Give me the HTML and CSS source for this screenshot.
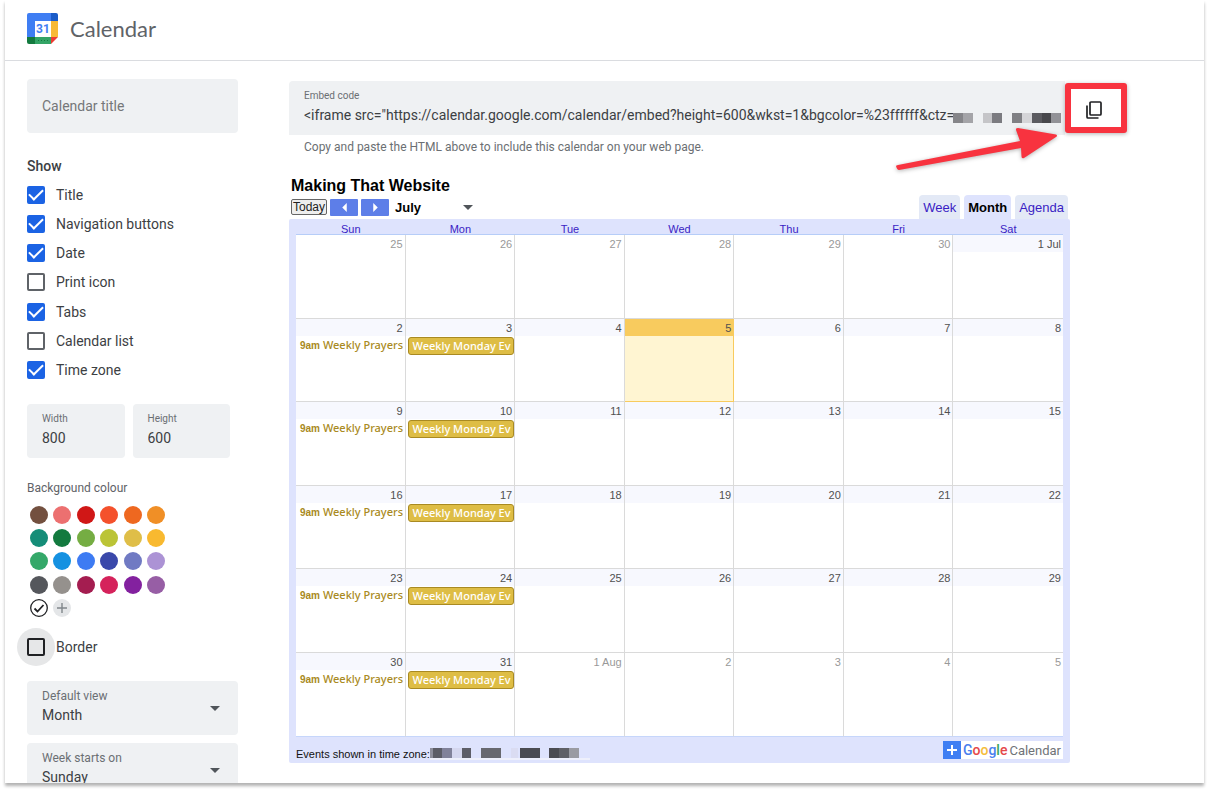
FILE: index.html
```html
<!DOCTYPE html>
<html lang="en-GB">
<head>
  <meta charset="UTF-8" />
  <meta name="viewport" content="width=device-width, initial-scale=1.0"/>
  <title>Calendar</title>
  <link rel="stylesheet" href="styles.css">
</head>
<body>
  <div class="page">
    <header class="topbar">
      <svg class="logo" viewBox="0 0 31 31" aria-hidden="true">
        <path d="M2 0H24V8H8V24H0V2Q0 0 2 0Z" fill="#3f7ef3"/>
        <path d="M24 0H29Q31 0 31 2V8H24Z" fill="#1b5cc8"/>
        <path d="M24 8H31V24H24Z" fill="#f8b934"/>
        <path d="M8 24H24V31H8Z" fill="#33a466"/>
        <path d="M0 24H8V31H2Q0 31 0 29Z" fill="#137a3f"/>
        <path d="M24 24H31L24 31Z" fill="#ee3b33"/>
        <path d="M8 8H24V24H8Z" fill="#fff"/>
        <path d="M11 27.500H22" stroke="#137a3f" stroke-width="1" stroke-dasharray="1 2"/>
        <text x="16" y="20" text-anchor="middle" class="logo-day">31</text>
      </svg>
      <span class="brand">Calendar</span>
    </header>

    <div class="layout">
      <aside class="sidebar">
        <input class="field title-field" type="text" placeholder="Calendar title" aria-label="Calendar title" />

        <h2 class="show-heading">Show</h2>
        <div class="options">
          <label class="option"><input type="checkbox" checked /> Title</label>
          <label class="option"><input type="checkbox" checked /> Navigation buttons</label>
          <label class="option"><input type="checkbox" checked /> Date</label>
          <label class="option"><input type="checkbox" /> Print icon</label>
          <label class="option"><input type="checkbox" checked /> Tabs</label>
          <label class="option"><input type="checkbox" /> Calendar list</label>
          <label class="option"><input type="checkbox" checked /> Time zone</label>
        </div>

        <div class="sizes">
          <div class="field">
            <label class="field-label small" for="width">Width</label>
            <input type="text" id="width" value="800" />
          </div>
          <div class="field">
            <label class="field-label small" for="height">Height</label>
            <input type="text" id="height" value="600" />
          </div>
        </div>

        <h2 class="colour-heading">Background colour</h2>
        <div class="swatches">
          <button class="swatch brown" aria-label="Cocoa"></button>
          <button class="swatch flamingo" aria-label="Flamingo"></button>
          <button class="swatch tomato" aria-label="Tomato"></button>
          <button class="swatch tangerine" aria-label="Tangerine"></button>
          <button class="swatch pumpkin" aria-label="Pumpkin"></button>
          <button class="swatch mango" aria-label="Mango"></button>
          <button class="swatch eucalyptus" aria-label="Eucalyptus"></button>
          <button class="swatch basil" aria-label="Basil"></button>
          <button class="swatch pistachio" aria-label="Pistachio"></button>
          <button class="swatch avocado" aria-label="Avocado"></button>
          <button class="swatch citron" aria-label="Citron"></button>
          <button class="swatch banana" aria-label="Banana"></button>
          <button class="swatch sage" aria-label="Sage"></button>
          <button class="swatch peacock" aria-label="Peacock"></button>
          <button class="swatch cobalt" aria-label="Cobalt"></button>
          <button class="swatch blueberry" aria-label="Blueberry"></button>
          <button class="swatch lavender" aria-label="Lavender"></button>
          <button class="swatch wisteria" aria-label="Wisteria"></button>
          <button class="swatch graphite" aria-label="Graphite"></button>
          <button class="swatch birch" aria-label="Birch"></button>
          <button class="swatch beetroot" aria-label="Beetroot"></button>
          <button class="swatch cherry" aria-label="Cherry"></button>
          <button class="swatch grape" aria-label="Grape"></button>
          <button class="swatch amethyst" aria-label="Amethyst"></button>
          <button class="swatch white" aria-label="White">
            <svg viewBox="0 0 18 18"><circle cx="9" cy="9" r="8.300" fill="#fff" stroke="#202124" stroke-width="1.300"/><path d="M4.500 9.500L7.500 12.500L13.500 6" fill="none" stroke="#202124" stroke-width="1.800"/></svg>
          </button>
          <button class="swatch add" aria-label="Add custom colour">
            <svg viewBox="0 0 18 18"><path d="M9 4V14M4 9H14" stroke="#80868b" stroke-width="1.400"/></svg>
          </button>
        </div>

        <label class="option border-option"><span class="ripple"><input type="checkbox" /></span> Border</label>

        <div class="field picker">
          <div class="picker-text">
            <label class="field-label" for="view">Default view</label>
            <select id="view"><option>Month</option><option>Week</option><option>Agenda</option></select>
          </div>
          <svg class="caret" viewBox="0 0 10 5"><path d="M0 0H10L5 5Z" fill="#50555a"/></svg>
        </div>
        <div class="field picker">
          <div class="picker-text">
            <label class="field-label" for="week-start">Week starts on</label>
            <select id="week-start"><option>Sunday</option><option>Monday</option><option>Saturday</option></select>
          </div>
          <svg class="caret" viewBox="0 0 10 5"><path d="M0 0H10L5 5Z" fill="#50555a"/></svg>
        </div>
      </aside>

      <main class="main">
        <div class="embed">
          <div class="embed-field">
            <label class="field-label small" for="embed-code">Embed code</label>
            <div class="embed-line">
              <input type="text" id="embed-code" readonly value='&lt;iframe src="https://calendar.google.com/calendar/embed?height=600&amp;wkst=1&amp;bgcolor=%23ffffff&amp;ctz=' />
              <svg class="redacted-code" viewBox="0 0 108 10" aria-hidden="true">
                <path d="M0 0H10V10H0Z" fill="#858589"/><path d="M10 0H20V10H10Z" fill="#a4a4a8"/>
                <path d="M30 0H39V10H30Z" fill="#c5c5c8"/><path d="M39 0H49V10H39Z" fill="#7b7b80"/>
                <path d="M59 0H69V10H59Z" fill="#808084"/><path d="M69 0H79V10H69Z" fill="#d5d5d8"/>
                <path d="M79 0H89V10H79Z" fill="#5b5b60"/><path d="M89 0H98V10H89Z" fill="#48484c"/>
                <path d="M98 0H108V10H98Z" fill="#929297"/>
              </svg>
            </div>
          </div>
          <button class="copy" aria-label="Copy to clipboard">
            <svg viewBox="0 0 16 18"><path d="M5 1H14Q15 1 15 2V13Q15 14 14 14H5Q4 14 4 13V2Q4 1 5 1ZM1 4.500V16Q1 17 2 17H12.500" fill="none" stroke="#202124" stroke-width="1.700"/></svg>
          </button>
          <svg class="arrow" viewBox="0 0 162 58" aria-hidden="true">
            <path d="M2 37L124 13L120 2Q119.500 0 122 0L160 6.500Q162 7.500 160 9L128 30Q125.500 31 125.500 28.500L125 20L3 42Q1 42 0 38Q0 37.500 2 37Z" fill="#f8333f"/>
          </svg>
        </div>
        <p class="hint">Copy and paste the HTML above to include this calendar on your web page.</p>

        <section class="preview">
          <h1>Making That Website</h1>
          <div class="controls">
            <button class="today">Today</button>
            <button class="nav" aria-label="Previous"><svg viewBox="0 0 5 10"><path d="M5 0V10L0 5Z" fill="#fff"/></svg></button>
            <button class="nav" aria-label="Next"><svg viewBox="0 0 5 10"><path d="M0 0V10L5 5Z" fill="#fff"/></svg></button>
            <button class="period"><span>July</span><svg class="caret" viewBox="0 0 10 5"><path d="M0 0H10L5 5Z" fill="#50555a"/></svg></button>
            <nav class="tabs">
              <a href="#">Week</a>
              <a href="#" class="active">Month</a>
              <a href="#">Agenda</a>
            </nav>
          </div>

          <div class="calendar">
            <table>
              <thead>
                <tr><th>Sun</th><th>Mon</th><th>Tue</th><th>Wed</th><th>Thu</th><th>Fri</th><th>Sat</th></tr>
              </thead>
              <tbody>
                <tr>
                  <td class="other"><span class="day">25</span></td>
                  <td class="other"><span class="day">26</span></td>
                  <td class="other"><span class="day">27</span></td>
                  <td class="other"><span class="day">28</span></td>
                  <td class="other"><span class="day">29</span></td>
                  <td class="other"><span class="day">30</span></td>
                  <td><span class="day">1 Jul</span></td>
                </tr>
                <tr>
                  <td><span class="day">2</span><a class="timed" href="#"><b>9am</b> Weekly Prayers</a></td>
                  <td><span class="day">3</span><a class="allday" href="#">Weekly Monday Ev</a></td>
                  <td><span class="day">4</span></td>
                  <td class="current"><span class="day">5</span></td>
                  <td><span class="day">6</span></td>
                  <td><span class="day">7</span></td>
                  <td><span class="day">8</span></td>
                </tr>
                <tr>
                  <td><span class="day">9</span><a class="timed" href="#"><b>9am</b> Weekly Prayers</a></td>
                  <td><span class="day">10</span><a class="allday" href="#">Weekly Monday Ev</a></td>
                  <td><span class="day">11</span></td>
                  <td><span class="day">12</span></td>
                  <td><span class="day">13</span></td>
                  <td><span class="day">14</span></td>
                  <td><span class="day">15</span></td>
                </tr>
                <tr>
                  <td><span class="day">16</span><a class="timed" href="#"><b>9am</b> Weekly Prayers</a></td>
                  <td><span class="day">17</span><a class="allday" href="#">Weekly Monday Ev</a></td>
                  <td><span class="day">18</span></td>
                  <td><span class="day">19</span></td>
                  <td><span class="day">20</span></td>
                  <td><span class="day">21</span></td>
                  <td><span class="day">22</span></td>
                </tr>
                <tr>
                  <td><span class="day">23</span><a class="timed" href="#"><b>9am</b> Weekly Prayers</a></td>
                  <td><span class="day">24</span><a class="allday" href="#">Weekly Monday Ev</a></td>
                  <td><span class="day">25</span></td>
                  <td><span class="day">26</span></td>
                  <td><span class="day">27</span></td>
                  <td><span class="day">28</span></td>
                  <td><span class="day">29</span></td>
                </tr>
                <tr>
                  <td><span class="day">30</span><a class="timed" href="#"><b>9am</b> Weekly Prayers</a></td>
                  <td><span class="day">31</span><a class="allday" href="#">Weekly Monday Ev</a></td>
                  <td class="other"><span class="day">1 Aug</span></td>
                  <td class="other"><span class="day">2</span></td>
                  <td class="other"><span class="day">3</span></td>
                  <td class="other"><span class="day">4</span></td>
                  <td class="other"><span class="day">5</span></td>
                </tr>
              </tbody>
            </table>
            <footer class="calendar-footer">
              <span class="timezone">Events shown in time zone:
                <svg class="redacted-zone" viewBox="0 0 160 13" aria-hidden="true">
                  <path d="M0 10H160V12H0Z" fill="#eef0fc"/>
                  <path d="M0 0H3V10H0Z" fill="#8d8e9c"/><path d="M3 0H12V10H3Z" fill="#5c5d67"/>
                  <path d="M12 0H22V10H12Z" fill="#81829a"/><path d="M22 0H32V10H22Z" fill="#d5d7ef"/>
                  <path d="M32 0H41V10H32Z" fill="#5d5e68"/><path d="M51 0H71V10H51Z" fill="#67686f"/>
                  <path d="M81 0H88V10H81Z" fill="#dadcf2"/><path d="M90 0H110V10H90Z" fill="#4b4c52"/>
                  <path d="M119 0H129V10H119Z" fill="#4b4c52"/><path d="M129 0H139V10H129Z" fill="#5f6066"/>
                  <path d="M139 0H149V10H139Z" fill="#9a9ba2"/>
                </svg>
              </span>
              <a class="google" href="#">
                <span class="plus"><svg viewBox="0 0 18 18"><path d="M9 4V14M4 9H14" stroke="#fff" stroke-width="2"/></svg></span>
                <span class="google-name"><i class="b">G</i><i class="r">o</i><i class="y">o</i><i class="b">g</i><i class="g">l</i><i class="r">e</i></span>
                <span>Calendar</span>
              </a>
            </footer>
          </div>
        </section>
      </main>
    </div>
  </div>
</body>
</html>
```
FILE: styles.css
```css
* {
  box-sizing: border-box;
}
body {
  min-height: 100vh;
  margin: 0;
  background: #fff;
  color: #3c4043;
  font-family: Roboto, Arial, sans-serif;
  font-size: 14px;
}
button, input, select {
  margin: 0;
  padding: 0;
  border: 0;
  background: none;
  color: inherit;
  font: inherit;
}
h1, h2, p {
  margin: 0;
}
svg {
  display: block;
}
a {
  text-decoration: none;
}
.page {
  height: calc(100vh - 9px);
  margin: 0 5px;
  overflow: hidden;
  background: #fff;
  box-shadow: 0 3px 3px rgba(0,0,0,0.3);
}

/* header */
.topbar {
  display: flex;
  align-items: center;
  gap: 12px;
  height: 61px;
  padding: 0 22px 4px;
  border-bottom: 1px solid #dadce0;
}
.logo {
  width: 31px;
  height: 31px;
}
.logo-day {
  font: bold 12px Roboto, sans-serif;
  fill: #3f7ef3;
}
.brand {
  color: #5f6368;
  font: 22px Lato, sans-serif;
}
.layout {
  display: flex;
  gap: 51px;
  padding: 18px 77px 0 22px;
}

/* sidebar */
.sidebar {
  flex: none;
  width: 211px;
}
.field {
  height: 54px;
  padding: 8px 15px;
  border-radius: 4px;
  background: #eff1f3;
}
.title-field {
  width: 100%;
}
.title-field::placeholder {
  color: #757779;
  opacity: 1;
}
.field-label {
  display: block;
  color: #6b6f73;
  font-size: 12px;
  line-height: 14px;
}
.small {
  font-size: 10px;
}
.show-heading {
  margin-top: 25px;
  font-size: 14px;
  font-weight: 500;
  line-height: 16px;
}
.options {
  display: grid;
  grid-template-rows: repeat(7, 1fr);
  height: 205px;
  margin-top: 6px;
}
.option {
  display: flex;
  align-items: center;
  gap: 11px;
}
input[type="checkbox"] {
  appearance: none;
  display: grid;
  place-content: center;
  width: 18px;
  height: 18px;
  border: 2px solid #5f6368;
  border-radius: 2px;
}
input[type="checkbox"]:checked {
  border-color: #1b63e4;
  background: #1b63e4;
}
input[type="checkbox"]:checked::before {
  content: "";
  width: 12px;
  height: 6px;
  margin-bottom: 4px;
  border: solid #fff;
  border-width: 0 0 2px 2px;
  transform: rotate(-45deg);
}
.sizes {
  display: grid;
  grid-template-columns: 1fr 1fr;
  gap: 8px;
  margin: 19px 8px 0 0;
}
.sizes input {
  width: 100%;
  margin-top: 4px;
  line-height: 16px;
}
.colour-heading {
  margin-top: 23px;
  color: #5f6368;
  font-size: 12px;
  font-weight: 400;
  line-height: 14px;
}
.swatches {
  display: grid;
  grid-template-columns: repeat(6, 1fr);
  grid-template-rows: repeat(5, 1fr);
  place-items: center;
  width: 141px;
  height: 117px;
  margin-top: 8px;
}
.swatch {
  width: 18px;
  height: 18px;
  border-radius: 50%;
}
.brown { background: #73503f; }
.flamingo { background: #ec7070; }
.tomato { background: #d01716; }
.tangerine { background: #f4512c; }
.pumpkin { background: #ee6820; }
.mango { background: #f08f26; }
.eucalyptus { background: #158d78; }
.basil { background: #137a3f; }
.pistachio { background: #75ad43; }
.avocado { background: #bbc436; }
.citron { background: #dfbe48; }
.banana { background: #f8b930; }
.sage { background: #34a869; }
.peacock { background: #1591e1; }
.cobalt { background: #3d7bf3; }
.blueberry { background: #3a48aa; }
.lavender { background: #707ac3; }
.wisteria { background: #ac93d5; }
.graphite { background: #55575c; }
.birch { background: #95918d; }
.beetroot { background: #a41d50; }
.cherry { background: #d5225b; }
.grape { background: #83219f; }
.amethyst { background: #975ea5; }
.add { background: #e4e6e8; }
.border-option {
  gap: 1px;
  margin: 8px 0 15px -10px;
}
.ripple {
  display: grid;
  place-items: center;
  width: 38px;
  height: 38px;
  border-radius: 50%;
  background: #e6e7e8;
}
.ripple input[type="checkbox"] {
  border-color: #202124;
}
.picker {
  display: flex;
  align-items: center;
  padding-right: 18px;
  margin-bottom: 8px;
}
.picker-text {
  flex: 1;
  padding-bottom: 4px;
}
.picker select {
  appearance: none;
  width: 100%;
  margin-top: 3px;
  line-height: 18px;
}
.caret {
  width: 10px;
  height: 5px;
}

/* embed code */
.main {
  flex: 1;
  min-width: 0;
}
.embed {
  position: relative;
  display: flex;
  align-items: center;
  height: 58px;
}
.embed-field {
  flex: 1;
  height: 54px;
  padding: 8px 4px 8px 15px;
  border-radius: 4px 0 0 0;
  background: #eff1f3;
}
.embed-line {
  display: flex;
  align-items: center;
  margin-top: 3px;
}
.embed-line input {
  flex: 1;
  min-width: 0;
  line-height: 18px;
}
.redacted-code {
  width: 108px;
  height: 10px;
  margin-top: 6px;
}
.copy {
  display: grid;
  place-items: center;
  width: 62px;
  height: 50px;
  padding: 3px 4px 0 0;
  border: 6px solid #f8333f;
  border-radius: 3px;
  background: #fff;
  box-shadow: 0 1px 4px rgba(0,0,0,0.3);
}
.copy svg {
  width: 16px;
  height: 18px;
}
.arrow {
  position: absolute;
  right: 69px;
  top: 49px;
  width: 162px;
  height: 58px;
  filter: drop-shadow(0 1px 2px rgba(0,0,0,0.3));
}
.hint {
  padding-left: 15px;
  color: #6b6f73;
  font-size: 12px;
  line-height: 20px;
}

/* calendar preview */
.preview {
  margin: 20px 57px 0 0;
  font-family: "Liberation Sans", Arial, sans-serif;
}
.preview h1 {
  padding-left: 2px;
  color: #000;
  font-size: 16px;
  line-height: 18px;
}
.controls {
  display: flex;
  align-items: center;
  gap: 3px;
  height: 24px;
  padding-left: 2px;
}
.today {
  width: 36px;
  height: 16px;
  border: 1px solid #666;
  border-radius: 2px;
  background: #eee;
  color: #222;
  font-size: 12px;
  line-height: 14px;
}
.nav {
  display: grid;
  place-items: center;
  width: 28px;
  height: 17px;
  border-radius: 1px;
  background: #5d7ee8;
}
.nav svg {
  width: 5px;
  height: 9px;
}
.period {
  display: flex;
  align-items: center;
  justify-content: space-between;
  width: 78px;
  margin-left: 3px;
  color: #000;
  font-size: 13px;
  font-weight: bold;
}
.tabs {
  display: flex;
  align-self: stretch;
  gap: 4px;
  margin-left: auto;
  margin-right: 2px;
  font-size: 13px;
  line-height: 26px;
}
.tabs a {
  padding: 0 4px;
  border-radius: 4px 4px 0 0;
  background: #e3e9f6;
  color: #3a1dc4;
}
.tabs .active {
  background: #dee3fd;
  color: #000;
  font-weight: bold;
}
.calendar {
  padding: 0 7px;
  border-radius: 2px;
  background: #dee3fd;
}
.calendar table {
  width: 100%;
  border-collapse: separate;
  border-spacing: 0;
  table-layout: fixed;
}
.calendar th {
  height: 16px;
  padding: 5px 0 0;
  border-bottom: 1px solid #b6cdf8;
  color: #3a1dc4;
  font-size: 11px;
  font-weight: 400;
  line-height: 10px;
}
.calendar td {
  height: 84px;
  padding: 0;
  border-right: 1px solid #dadada;
  border-bottom: 1px solid #dadada;
  background: #fff;
  vertical-align: top;
}
.calendar td:last-child {
  border-right: 0;
}
/* odd pixels of the month height come off these two rows */
.calendar tbody tr:nth-child(even):not(:last-child) td {
  height: 83px;
}
.calendar tr:last-child td {
  border-bottom-color: #c6d6fb;
}
.day {
  display: block;
  padding: 1px 2px 0 0;
  background: #f7f8fe;
  color: #505050;
  font-size: 11px;
  line-height: 16px;
  text-align: right;
}
.other .day {
  background: none;
  color: #999;
}
.calendar .current {
  border-color: #f8cb5e;
  background: #fff5d2;
}
.current .day {
  background: #f8cb5e;
}
.timed, .allday {
  display: block;
  overflow: hidden;
  font-family: "Noto Sans", Verdana, sans-serif;
  font-size: 11px;
  font-weight: 500;
  white-space: nowrap;
}
.timed {
  padding: 1px 0 0 4px;
  color: #a98a22;
  line-height: 16px;
}
.timed b {
  font: bold 10px "Liberation Sans", Arial, sans-serif;
}
.allday {
  margin: 1px 0 0 2px;
  padding-left: 4px;
  border: 1px solid #a98a22;
  border-radius: 3px;
  background: #debd45;
  color: #fff;
  line-height: 16px;
}
.calendar-footer {
  display: flex;
  align-items: center;
  justify-content: space-between;
  height: 26px;
}
.timezone {
  display: flex;
  align-items: center;
  padding-top: 8px;
  color: #111;
  font-size: 11px;
}
.redacted-zone {
  width: 160px;
  height: 13px;
}
.google {
  display: flex;
  align-items: center;
  gap: 2px;
  height: 18px;
  padding-right: 2px;
  background: #fff;
  color: #6f7377;
  font: 13px Roboto, sans-serif;
}
.plus {
  width: 18px;
  height: 18px;
  background: #3f7ef3;
}
.google-name {
  font-size: 14px;
}
.google-name i {
  font-style: normal;
  font-weight: 500;
}
.b { color: #4a80ee; }
.r { color: #e5484a; }
.y { color: #f5bd3c; }
.g { color: #3aa65f; }
```
